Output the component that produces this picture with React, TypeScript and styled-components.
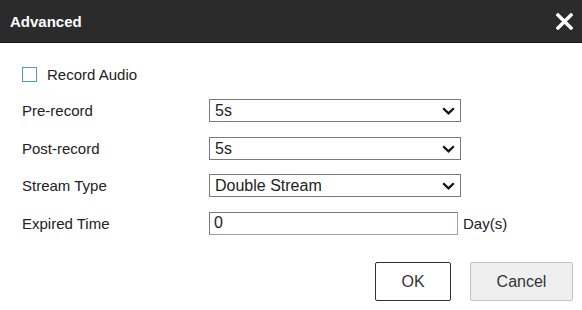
import React from 'react';
import styled, { createGlobalStyle } from 'styled-components';

const GlobalStyle = createGlobalStyle`
    html, body {
        margin: 0;
        padding: 0;
        background: #fff;
    }
    body {
        font-family: "Liberation Sans", Arial, sans-serif;
        color: #222;
    }
`;

const rows = [
    { label: 'Pre-record', value: '5s', options: ['5s', '10s', '15s', '30s'] },
    { label: 'Post-record', value: '5s', options: ['5s', '10s', '30s', '1min'] },
    { label: 'Stream Type', value: 'Double Stream', options: ['Main Stream', 'Double Stream'] },
];

export default function App() {
    return <Dialog>
        <GlobalStyle />
        <TitleBar>
            <Title>Advanced</Title>
            <CloseButton aria-label="close">
                <svg width="17" height="17" viewBox="0 0 17 17">
                    <path d="M2 2 L15 15 M15 2 L2 15" stroke="#fff" strokeWidth="3.4" strokeLinecap="square" />
                </svg>
            </CloseButton>
        </TitleBar>

        <Body>
            <CheckRow>
                <CheckBox type="checkbox" />
                <span>Record Audio</span>
            </CheckRow>

            <Form>
                {rows.map(row => <React.Fragment key={row.label}>
                    <Label>{row.label}</Label>
                    <SelectWrap>
                        <Select defaultValue={row.value}>
                            {row.options.map(o => <option key={o}>{o}</option>)}
                        </Select>
                        <Chevron width="13" height="8" viewBox="0 0 13 8">
                            <path d="M1.2 1.2 L6.5 6.4 L11.8 1.2" fill="none" stroke="#111" strokeWidth="2.2" />
                        </Chevron>
                    </SelectWrap>
                </React.Fragment>)}
                <Label>Expired Time</Label>
                <InputLine>
                    <TextInput defaultValue="0" />
                    <Unit>Day(s)</Unit>
                </InputLine>
            </Form>
        </Body>

        <Footer>
            <Button>OK</Button>
            <Button $secondary>Cancel</Button>
        </Footer>
    </Dialog>;
}

const Dialog = styled.div`
    width: 582px;
    height: 310px;
    display: flex;
    flex-direction: column;
    background: #fff;
    overflow: hidden;
`;

const TitleBar = styled.div`
    height: 42px;
    flex: none;
    display: flex;
    align-items: center;
    justify-content: space-between;
    padding: 0 9px 0 10px;
    background: #2b2b2b;
    border-bottom: 1px solid #161616;
`;

const Title = styled.h1`
    margin: 0;
    font-size: 15px;
    font-weight: bold;
    color: #fff;
`;

const CloseButton = styled.button`
    display: flex;
    padding: 0;
    border: 0;
    background: transparent;
    cursor: pointer;
`;

const Body = styled.div`
    padding: 23px 0 0 22px;
    font-size: 15px;
`;

const CheckRow = styled.label`
    display: flex;
    align-items: center;
    gap: 10px;
    height: 16px;
`;

const CheckBox = styled.input`
    appearance: none;
    margin: 0;
    width: 15px;
    height: 15px;
    border: 1px solid #4aa2ab;
    background: #fff;
`;

const Form = styled.div`
    display: grid;
    grid-template-columns: 187px auto;
    grid-auto-rows: 23px;
    row-gap: 14.5px;
    align-items: center;
    margin-top: 17px;
`;

const Label = styled.span`
    font-size: 15px;
`;

const SelectWrap = styled.div`
    position: relative;
    width: 252px;
    height: 23px;
`;

const Select = styled.select`
    appearance: none;
    width: 100%;
    height: 100%;
    margin: 0;
    padding: 0 24px 0 5px;
    border: 1px solid #7a7a7a;
    border-radius: 0;
    background: #fff;
    font-family: "Liberation Sans", Arial, sans-serif;
    font-size: 16px;
    color: #222;
`;

const Chevron = styled.svg`
    position: absolute;
    right: 6px;
    top: 8px;
    pointer-events: none;
`;

const InputLine = styled.div`
    display: flex;
    align-items: center;
    gap: 5px;
`;

const TextInput = styled.input`
    box-sizing: border-box;
    width: 249px;
    height: 23px;
    margin: 0;
    padding: 0 4px;
    border: 1px solid #a0a0a0;
    border-top-color: #7a7a7a;
    border-left-color: #7a7a7a;
    font-family: "Liberation Sans", Arial, sans-serif;
    font-size: 16px;
    color: #222;
`;

const Unit = styled.span`
    font-size: 15px;
`;

const Footer = styled.div`
    margin-top: auto;
    display: flex;
    justify-content: flex-end;
    gap: 19px;
    padding: 0 9px 9px 0;
`;

const Button = styled.button<{ $secondary?: boolean }>`
    height: 39px;
    width: ${p => p.$secondary ? '103px' : '76px'};
    margin: 0;
    padding: 0;
    border: 1px solid ${p => p.$secondary ? '#c4c4c4' : '#333'};
    border-radius: 2px;
    background: ${p => p.$secondary ? '#efefef' : '#fff'};
    font-family: "Liberation Sans", Arial, sans-serif;
    font-size: 16px;
    color: #333;
    cursor: pointer;
`;
